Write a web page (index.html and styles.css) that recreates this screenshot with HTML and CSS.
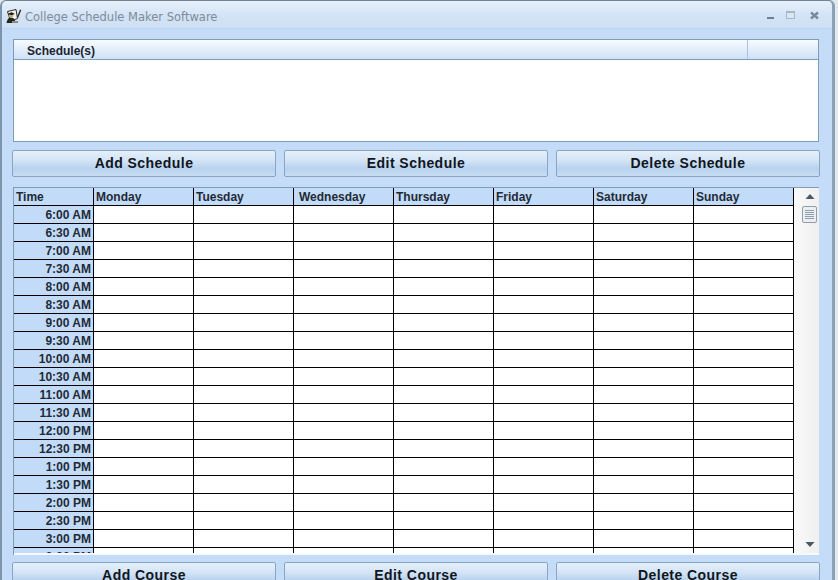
FILE: index.html
```html
<!DOCTYPE html>
<html lang="en">
<head>
<meta charset="utf-8">
<title>College Schedule Maker Software</title>
<link rel="stylesheet" href="styles.css">
</head>
<body>
<div class="window">
  <header class="titlebar">
    <svg class="app-icon" width="16" height="16" viewBox="0 0 16 16"><path d="M1.500 3.500L10 1.500l1.500 9-7 2.500z" fill="#f4f3ea" stroke="#2a2a26" stroke-width="1"/><path d="M0.500 15c.5-3.500 2-5.500 4-5.500s4 1 4.500 3l-.5 2.500z" fill="#26261f"/><circle cx="5" cy="7.500" r="2.300" fill="#c2aa7e"/><path d="M1.500 6l4-1.800 3.500 1.800-3.500 1z" fill="#141412"/><path d="M11 9l3-7.500 1.300.6-3 7.500z" fill="#26261f"/><path d="M6 13h6v2H6z" fill="#8d8d84"/></svg>
    <span class="title">College Schedule Maker Software</span>
    <div class="controls">
      <svg class="ctl-min" width="12" height="12" viewBox="0 0 12 12"><rect x="2" y="7" width="7" height="2" fill="#6d7f93"/></svg>
      <svg class="ctl-max" width="12" height="12" viewBox="0 0 12 12"><rect x="1.500" y="1.500" width="8" height="7" fill="#dbe6f3" stroke="#a9b6c5"/><rect x="1" y="1" width="9" height="2" fill="#a9b6c5"/></svg>
      <svg class="ctl-close" width="12" height="12" viewBox="0 0 12 12"><path d="M2 2.500l7 6M9 2.500l-7 6" stroke="#7a8a9c" stroke-width="2.400"/></svg>
    </div>
  </header>
  <main class="content">
    <section class="list">
      <div class="list-head">
        <div class="list-col">Schedule(s)</div>
        <div class="list-col-end"></div>
      </div>
    </section>
    <div class="buttons buttons-top">
      <button class="btn">Add Schedule</button>
      <button class="btn">Edit Schedule</button>
      <button class="btn">Delete Schedule</button>
    </div>
    <section class="grid-wrap">
      <div class="grid-clip">
        <table class="grid">
          <thead>
            <tr><th>Time</th><th>Monday</th><th>Tuesday</th><th class="wide-pad">Wednesday</th><th>Thursday</th><th>Friday</th><th>Saturday</th><th>Sunday</th></tr>
          </thead>
          <tbody>
            <tr><th>6:00 AM</th><td></td><td></td><td></td><td></td><td></td><td></td><td></td></tr>
            <tr><th>6:30 AM</th><td></td><td></td><td></td><td></td><td></td><td></td><td></td></tr>
            <tr><th>7:00 AM</th><td></td><td></td><td></td><td></td><td></td><td></td><td></td></tr>
            <tr><th>7:30 AM</th><td></td><td></td><td></td><td></td><td></td><td></td><td></td></tr>
            <tr><th>8:00 AM</th><td></td><td></td><td></td><td></td><td></td><td></td><td></td></tr>
            <tr><th>8:30 AM</th><td></td><td></td><td></td><td></td><td></td><td></td><td></td></tr>
            <tr><th>9:00 AM</th><td></td><td></td><td></td><td></td><td></td><td></td><td></td></tr>
            <tr><th>9:30 AM</th><td></td><td></td><td></td><td></td><td></td><td></td><td></td></tr>
            <tr><th>10:00 AM</th><td></td><td></td><td></td><td></td><td></td><td></td><td></td></tr>
            <tr><th>10:30 AM</th><td></td><td></td><td></td><td></td><td></td><td></td><td></td></tr>
            <tr><th>11:00 AM</th><td></td><td></td><td></td><td></td><td></td><td></td><td></td></tr>
            <tr><th>11:30 AM</th><td></td><td></td><td></td><td></td><td></td><td></td><td></td></tr>
            <tr><th>12:00 PM</th><td></td><td></td><td></td><td></td><td></td><td></td><td></td></tr>
            <tr><th>12:30 PM</th><td></td><td></td><td></td><td></td><td></td><td></td><td></td></tr>
            <tr><th>1:00 PM</th><td></td><td></td><td></td><td></td><td></td><td></td><td></td></tr>
            <tr><th>1:30 PM</th><td></td><td></td><td></td><td></td><td></td><td></td><td></td></tr>
            <tr><th>2:00 PM</th><td></td><td></td><td></td><td></td><td></td><td></td><td></td></tr>
            <tr><th>2:30 PM</th><td></td><td></td><td></td><td></td><td></td><td></td><td></td></tr>
            <tr><th>3:00 PM</th><td></td><td></td><td></td><td></td><td></td><td></td><td></td></tr>
            <tr><th>3:30 PM</th><td></td><td></td><td></td><td></td><td></td><td></td><td></td></tr>
          </tbody>
        </table>
      </div>
      <div class="scrollbar">
        <svg width="16" height="14" viewBox="0 0 16 14"><path d="M3.500 10L8 5l4.500 5z" fill="#4a5868"/></svg>
        <div class="thumb"><i></i><i></i><i></i><i></i><i></i></div>
        <div class="track"></div>
        <svg width="16" height="14" viewBox="0 0 16 14"><path d="M3.500 5L8 10l4.500-5z" fill="#4a5868"/></svg>
      </div>
    </section>
    <div class="buttons">
      <button class="btn">Add Course</button>
      <button class="btn">Edit Course</button>
      <button class="btn">Delete Course</button>
    </div>
  </main>
</div>
</body>
</html>
```

FILE: styles.css
```css
* { box-sizing: border-box; }
html, body { margin: 0; height: 580px; overflow: hidden; background: #e4e8ec; }
.window {
  width: 835px;
  height: 600px;
  border: 1px solid #6f8296;
  border-left: 2px solid #7d93ab;
  border-right: 3px solid #8aa0b8;
  border-radius: 6px 6px 0 0;
  background: #c4dcf8;
  display: flex;
  flex-direction: column;
}
.titlebar {
  height: 28px;
  flex: none;
  display: flex;
  align-items: center;
  padding: 2px 11px 0 4px;
  background: linear-gradient(#e6f0fb, #d3e3f6 55%, #cfe0f5);
  border-bottom: 1px solid #bcd6f2;
  border-radius: 5px 5px 0 0;
}
.app-icon { flex: none; margin-right: 3px; }
.title { font: 11.5px "DejaVu Sans", sans-serif; color: #7f8b98; margin-top: 2px; }
.controls { margin-left: auto; display: flex; align-items: center; }
.ctl-max { margin-left: 8px; }
.ctl-close { margin-left: 12px; }
.content {
  flex: 1;
  padding: 10px 13px 0 11px;
  display: flex;
  flex-direction: column;
}
.list {
  height: 103px;
  flex: none;
  background: #fff;
  border: 1px solid #7f9db9;
}
.list-head {
  height: 20px;
  display: flex;
  background: linear-gradient(#f8fbff, #e4effb 45%, #cfe2f7);
  border-bottom: 1px solid #7f9db9;
}
.list-col {
  width: 734px;
  padding: 4px 0 0 13px;
  font: bold 12px/14px "Liberation Sans", Arial, sans-serif;
  color: #1b2430;
  border-right: 1px solid #a9c3dc;
}
.list-col-end { flex: 1; }
.buttons {
  flex: none;
  display: grid;
  grid-template-columns: 264px 264px 264px;
  column-gap: 8px;
  margin-left: -1px;
}
.buttons-top { margin-top: 8px; }
.btn {
  height: 27px;
  border: 1px solid #8aa5c2;
  border-radius: 2px;
  background: linear-gradient(#e4effa, #d5e5f7 35%, #b9d2ee 70%, #c7dcf4);
  font: bold 14px/16px "Liberation Sans", Arial, sans-serif;
  letter-spacing: 0.45px;
  color: #10161c;
  padding: 0 0 2px;
}
.grid-wrap {
  flex: none;
  height: 368px;
  margin: 10px 0 7px;
  width: 806px;
  display: flex;
  padding-bottom: 2px;
  background: #f6f9fd;
  border-top: 1px solid #7f9db9;
  border-left: 1px solid #7f9db9;
}
.grid-clip { width: 780px; flex: none; height: 100%; overflow: hidden; }
.grid {
  border-collapse: separate;
  border-spacing: 0;
  table-layout: fixed;
  width: 780px;
}
.grid tr { height: 18px; }
.grid th, .grid td {
  padding: 0;
  height: 18px;
  border-right: 1px solid #000;
  border-bottom: 1px solid #000;
}
.grid th {
  background: #c2dbf8;
  font: bold 12px/15px "Liberation Sans", Arial, sans-serif;
  padding-top: 2px;
  color: #1f2a36;
  overflow: hidden;
  white-space: nowrap;
}
.grid td { background: #fff; width: 100px; }
.grid th:first-child { width: 80px; }
.grid thead th { text-align: left; padding-left: 2px; width: 100px; }
.grid thead th:first-child { width: 80px; }
.grid thead th.wide-pad { padding-left: 5px; }
.grid tbody th { text-align: right; padding-right: 2px; }
.scrollbar {
  width: 25px;
  flex: none;
  padding: 1px 1px 2px 7px;
  background: linear-gradient(90deg, #fafafa, #efefef);
  display: flex;
  flex-direction: column;
  align-items: center;
}
.thumb {
  width: 15px;
  height: 17px;
  margin-top: 3px;
  border: 1px solid #8f9dac;
  border-radius: 2px;
  background: #eceff2;
  display: flex;
  flex-direction: column;
  justify-content: center;
  align-items: center;
  gap: 1px;
}
.thumb i { display: block; width: 9px; height: 1px; background: #8f9dac; }
.track { flex: 1; }
```
